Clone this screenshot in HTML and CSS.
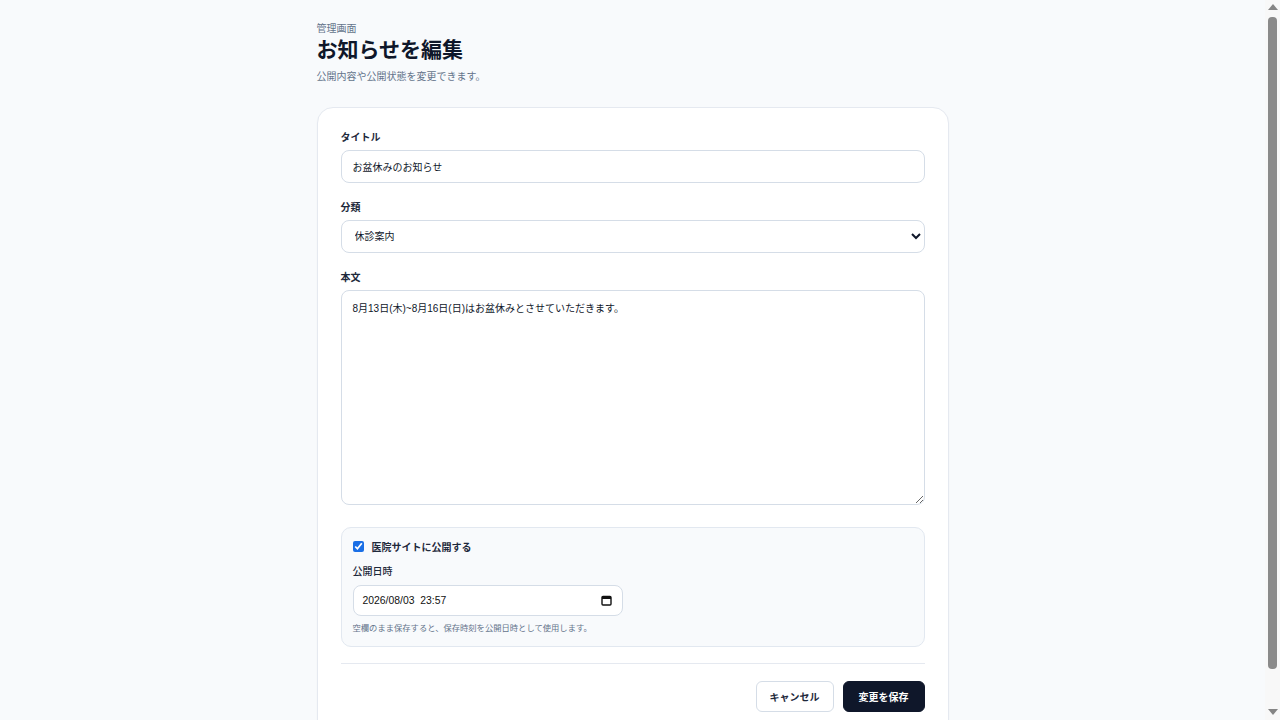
FILE: index.html
```html
<!DOCTYPE html>
<html lang="ja">
<head>
<meta charset="utf-8">
<title>お知らせを編集</title>
<link rel="stylesheet" href="styles.css">
</head>
<body>
<main class="page">
  <header class="page-head">
    <p class="eyebrow">管理画面</p>
    <h1 class="title">お知らせを編集</h1>
    <p class="subtitle">公開内容や公開状態を変更できます。</p>
  </header>
  <form class="card">
    <div class="field">
      <label class="label" for="title">タイトル</label>
      <input class="input" id="title" type="text" value="お盆休みのお知らせ">
    </div>
    <div class="field">
      <label class="label" for="cat">分類</label>
      <select class="input select" id="cat">
        <option>休診案内</option>
        <option>お知らせ</option>
      </select>
    </div>
    <div class="field field-body">
      <label class="label" for="body">本文</label>
      <textarea class="input textarea" id="body">8月13日(木)~8月16日(日)はお盆休みとさせていただきます。</textarea>
    </div>
    <div class="publish">
      <label class="check">
        <input type="checkbox" checked>
        <span>医院サイトに公開する</span>
      </label>
      <div class="label sub-label">公開日時</div>
      <div class="datetime">
        <span class="dt-value">2026/08/03&nbsp;&nbsp;23:57</span>
        <svg class="cal" width="11" height="11" viewBox="0 0 11 11" aria-hidden="true">
          <rect x="1" y="1.5" width="9" height="8.5" rx="1" fill="none" stroke="#111" stroke-width="1.4"/>
          <rect x="1" y="1.5" width="9" height="2.5" fill="#111"/>
        </svg>
      </div>
      <p class="hint">空欄のまま保存すると、保存時刻を公開日時として使用します。</p>
    </div>
    <div class="actions">
      <button type="button" class="btn btn-ghost">キャンセル</button>
      <button type="submit" class="btn btn-primary">変更を保存</button>
    </div>
  </form>
</main>
<div class="scrollbar" aria-hidden="true">
  <span class="sb-arrow sb-up"></span>
  <span class="sb-thumb"></span>
  <span class="sb-arrow sb-down"></span>
</div>
</body>
</html>
```

FILE: styles.css
```css
html, body {
  margin: 0;
  padding: 0;
}
body {
  background: #f8fafc;
  color: #0f172a;
  font-family: "Liberation Sans", "Noto Sans CJK JP", sans-serif;
  font-size: 10px;
  padding-right: 15px;
}
.page {
  max-width: 672px;
  margin: 0 auto;
  padding: 22px 20px 40px;
  box-sizing: border-box;
}
.page-head p,
.page-head h1 {
  margin: 0;
}
.eyebrow {
  font-size: 10px;
  line-height: 14px;
  color: #64748b;
}
.title {
  font-size: 21px;
  line-height: 28px;
  font-weight: 700;
  color: #0f172a;
}
.subtitle {
  margin-top: 6px !important;
  font-size: 10px;
  line-height: 14px;
  color: #64748b;
}
.card {
  margin-top: 23px;
  background: #fff;
  border: 1px solid #e5e9f0;
  border-radius: 16px;
  padding: 23px 23px 24px;
  box-shadow: 0 1px 2px rgba(15, 23, 42, 0.03);
}
.field {
  display: flex;
  flex-direction: column;
  gap: 5px;
  margin-bottom: 18px;
}
.label {
  font-size: 10px;
  line-height: 14px;
  font-weight: 700;
  color: #1e293b;
}
.input {
  display: block;
  box-sizing: border-box;
  width: 100%;
  height: 33px;
  margin: 0;
  border: 1px solid #d5dde7;
  border-radius: 8px;
  background: #fff;
  padding: 0 11px;
  font-family: inherit;
  font-size: 10px;
  color: #0f172a;
  outline: none;
}
.select {
  padding: 0 9px;
}
.textarea {
  height: 215px;
  padding: 11px;
  line-height: 14px;
  resize: vertical;
}
.field-body {
  margin-bottom: 22px;
}
.publish {
  background: #f8fafc;
  border: 1px solid #e2e8f0;
  border-radius: 10px;
  padding: 11px 11px 12px;
}
.check {
  display: flex;
  align-items: center;
  gap: 8px;
  height: 14px;
  font-size: 10px;
  font-weight: 700;
  color: #1e293b;
}
.check input {
  width: 11px;
  height: 11px;
  margin: 0;
  accent-color: #1a6fe6;
}
.sub-label {
  margin-top: 12px;
  font-weight: 500;
}
.datetime {
  margin-top: 6px;
  box-sizing: border-box;
  width: 270px;
  height: 31px;
  border: 1px solid #d5dde7;
  border-radius: 8px;
  background: #fff;
  display: flex;
  align-items: center;
  justify-content: space-between;
  padding: 0 10px 0 9px;
  font-size: 10.4px;
  color: #111;
}
.hint {
  margin: 6px 0 0;
  font-size: 8.3px;
  line-height: 12px;
  color: #64748b;
}
.actions {
  margin-top: 16px;
  border-top: 1px solid #e5e9f0;
  padding-top: 17px;
  display: flex;
  justify-content: flex-end;
  gap: 9px;
}
.btn {
  height: 31px;
  border-radius: 6px;
  font-family: inherit;
  font-size: 10px;
  font-weight: 700;
  cursor: pointer;
}
.btn-ghost {
  background: #fff;
  border: 1px solid #d5dde7;
  color: #1e293b;
  padding: 0 13px;
}
.btn-primary {
  background: #0f172a;
  border: 1px solid #0f172a;
  color: #fff;
  padding: 0 15px;
}
.scrollbar {
  position: fixed;
  top: 0;
  right: 0;
  width: 15px;
  height: 100vh;
  background: #f8f8f8;
  display: flex;
  flex-direction: column;
  align-items: center;
}
.sb-arrow {
  width: 0;
  height: 0;
  border-left: 5px solid transparent;
  border-right: 5px solid transparent;
}
.sb-up {
  margin-top: 4px;
  border-bottom: 6px solid #858585;
}
.sb-down {
  margin-bottom: 5px;
  border-top: 6px solid #858585;
}
.sb-thumb {
  width: 9px;
  margin: 7px 0 40px;
  flex: 1;
  background: #8a8a8a;
  border-radius: 4px;
}
```
